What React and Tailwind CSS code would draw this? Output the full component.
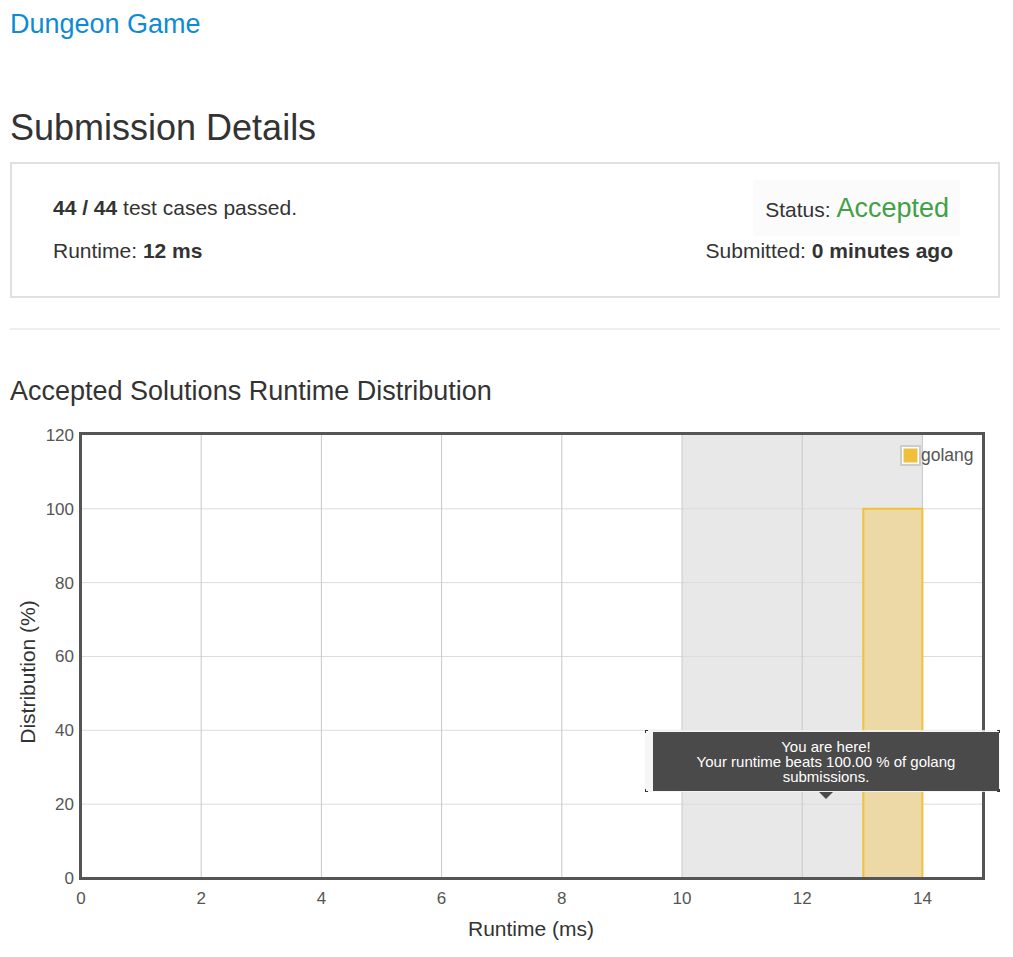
import React from 'react';

// Chart scale helpers (page coordinates, chart block starts at y=420)
const TOP = 420;
const xOf = (t) => 81 + t * 60.1;
const yOf = (v) => 877 - v * 3.692;

const RuntimeChart = () => {
    const yTicks = [0, 20, 40, 60, 80, 100, 120];
    const xTicks = [0, 2, 4, 6, 8, 10, 12, 14];

    return (
        <div className="relative w-[1013px] h-[537px]">
            <svg width="1013" height="537" viewBox={`0 ${TOP} 1013 537`} className="block">
                {/* shaded range */}
                <rect x={xOf(10)} y={433} width={xOf(14) - xOf(10)} height={444} fill="#e8e8e8" />

                {/* grid */}
                {yTicks.slice(1, -1).map((v) => (
                    <line key={v} x1={81} x2={983} y1={yOf(v)} y2={yOf(v)} stroke="#dcdcdc" strokeWidth="1" />
                ))}
                {xTicks.slice(1).map((t) => (
                    <line key={t} x1={xOf(t)} x2={xOf(t)} y1={433} y2={877} stroke="#c8c8c8" strokeWidth="1" />
                ))}

                {/* bar */}
                <rect x={xOf(13) + 1} y={yOf(100)} width={xOf(14) - xOf(13) - 1} height={yOf(0) - yOf(100)} fill="#ecd9a6" stroke="#f0c23c" strokeWidth="2" />

                {/* frame */}
                <rect x={80.5} y={432.5} width={903} height={445} fill="none" stroke="#555" strokeWidth="3" />

                {/* y tick labels */}
                {yTicks.map((v) => (
                    <text key={v} x={74} y={yOf(v) + 6} textAnchor="end" fontSize="17" fill="#555" fontFamily="'Liberation Sans', Arial, sans-serif">{v}</text>
                ))}
                {/* x tick labels */}
                {xTicks.map((t) => (
                    <text key={t} x={xOf(t)} y={903} textAnchor="middle" fontSize="17" fill="#555" fontFamily="'Liberation Sans', Arial, sans-serif">{t}</text>
                ))}

                {/* axis titles */}
                <text x={531} y={935} textAnchor="middle" fontSize="21" fill="#333" fontFamily="'Liberation Sans', Arial, sans-serif">Runtime (ms)</text>
                <text x={0} y={0} transform="translate(35 671) rotate(-90)" textAnchor="middle" fontSize="21" fill="#333" fontFamily="'Liberation Sans', Arial, sans-serif">Distribution (%)</text>

                {/* legend */}
                <rect x={901} y={445} width={19} height={19} fill="#fff" stroke="#ccc" strokeWidth="2" />
                <rect x={903.5} y={447.5} width={14} height={14} fill="#efc03c" />
                <text x={921} y={460} fontSize="17.5" fill="#555" fontFamily="'Liberation Sans', Arial, sans-serif">golang</text>
            </svg>

            {/* tooltip */}
            <div className="absolute left-[645px] top-[309px] w-[355px] h-[62px] bg-[#f4f4f4]/80">
                <div className="absolute left-0 top-0 w-[3px] h-[3px] border-l border-t border-[#333]"></div>
                <div className="absolute left-0 bottom-0 w-[3px] h-[3px] border-l border-b border-[#333]"></div>
                <div className="absolute right-0 top-0 w-[3px] h-[3px] border-r border-t border-[#333]"></div>
                <div className="absolute right-0 bottom-0 w-[3px] h-[3px] border-r border-b border-[#333]"></div>
                <div className="absolute left-[8px] top-[2px] w-[346px] h-[59px] bg-[#4a4a4a] text-white text-[15px] leading-[15px] text-center pt-[7px]">
                    <div>You are here!</div>
                    <div>Your runtime beats 100.00 % of golang</div>
                    <div>submissions.</div>
                </div>
                <div className="absolute left-[174px] top-[62px] w-0 h-0 border-l-[7px] border-r-[7px] border-t-[7px] border-l-transparent border-r-transparent border-t-[#4a4a4a]"></div>
            </div>
        </div>
    );
};

const App = () => {
    return (
        <div className="w-[1013px] h-[957px] bg-white text-[#333] font-['Liberation_Sans',Arial,sans-serif] overflow-hidden">
            <div className="pl-[10px] w-[1000px]">
                <div className="pt-[8px] text-[27px] leading-[32px] text-[#0e8bd3]">Dungeon Game</div>

                <h1 className="mt-[68px] text-[36px] leading-[40px]">Submission Details</h1>

                <div className="mt-[14px] h-[136px] border-2 border-[#e0e0e0] flex justify-between pl-[41px] pr-[45px]">
                    <div className="flex flex-col pt-[32px] text-[21px] leading-[24px] gap-[19px]">
                        <div><b>44 / 44</b> test cases passed.</div>
                        <div>Runtime: <b>12 ms</b></div>
                    </div>
                    <div className="flex flex-col items-end pt-[16px]">
                        <div className="bg-[#fbfbfb] h-[56px] pl-[12px] pr-[11px] flex items-center mr-[-7px]">
                            <span className="text-[21px] leading-[24px] mt-[4px]">Status:&nbsp;</span>
                            <span className="text-[27px] leading-[32px] text-[#43a047]">Accepted</span>
                        </div>
                        <div className="mt-[3px] text-[21px] leading-[24px]">Submitted: <b>0 minutes ago</b></div>
                    </div>
                </div>

                <div className="mt-[30px] h-[2px] bg-[#eeeeee]"></div>

                <h3 className="mt-[45px] text-[27px] leading-[32px]">Accepted Solutions Runtime Distribution</h3>
            </div>
            <div className="mt-[14px]">
                <RuntimeChart />
            </div>
        </div>
    );
};

export default App;
